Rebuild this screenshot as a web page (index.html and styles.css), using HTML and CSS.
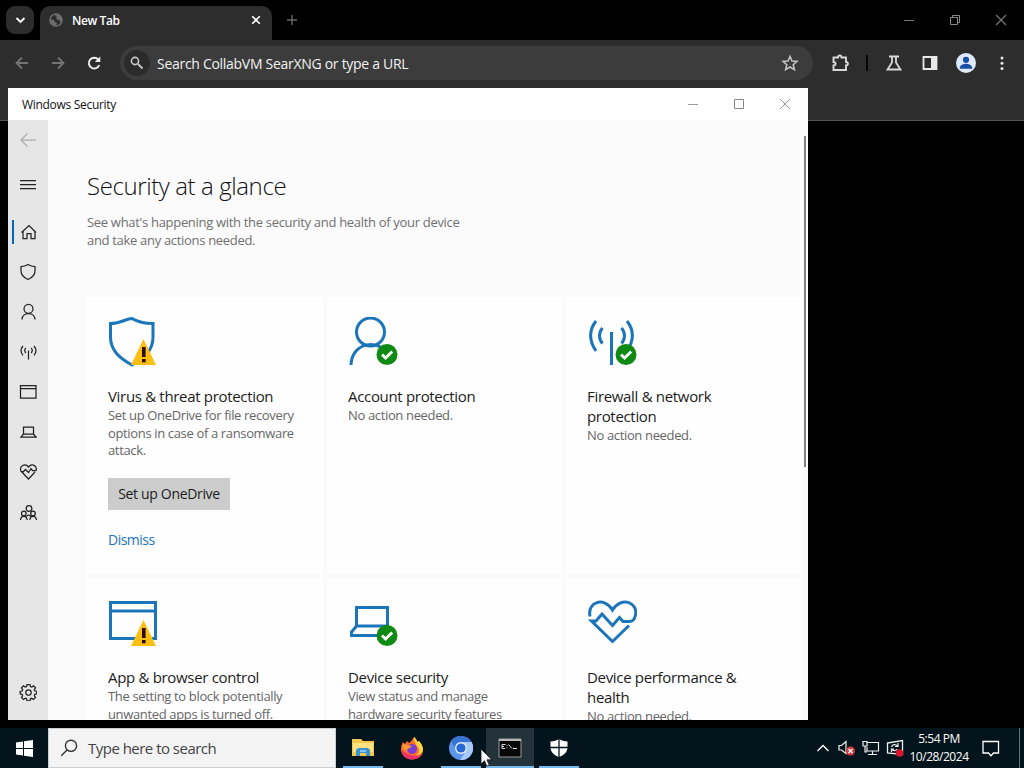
FILE: index.html
```
<!DOCTYPE html>
<html lang="en">
<head>
    <meta charset="UTF-8">
    <meta name="viewport" content="width=device-width, initial-scale=1.0">
    <title>Windows Security</title>
    <link rel="stylesheet" href="styles.css">
</head>
<body>
    <!-- Shared badges -->
    <svg class="defs" width="0" height="0">
        <defs>
            <g id="warn">
                <path d="M12.5 0L25 26H0z" fill="#fcbf12"/>
                <path d="M11 8h3.6v10H11zM11 20h3.6v3.2H11z" fill="#2a0a0a"/>
            </g>
            <g id="ok">
                <circle cx="10.5" cy="10.5" r="10.5" fill="#0f8a14"/>
                <path d="M5.5 10.5l3.6 3.6 6.6-6.6" fill="none" stroke="#fff" stroke-width="2.8"/>
            </g>
        </defs>
    </svg>

    <!-- Browser -->
    <header class="browser">
        <div class="tab-strip">
            <div class="tab-search">
                <svg width="28" height="28"><path d="M10.5 12l4 4 4-4" fill="none" stroke="#fff" stroke-width="1.8"/></svg>
            </div>
            <div class="tab">
                <svg width="14" height="14" viewBox="0 0 14 14"><circle cx="7" cy="7" r="6" fill="#2b2b2b" stroke="#6c6c6c" stroke-width="1.6"/><path d="M1 6l4 1 1 2 2 1-1 3-3-1-3-3zM7 1l-1 2 2 1-1 2 3 1 1 2 2-1V5l-3-3z" fill="#6c6c6c"/></svg>
                <span class="tab-title">New Tab</span>
                <svg width="10" height="10"><path d="M1.2 1.2l7.6 7.6M8.8 1.2L1.2 8.8" stroke="#fff" stroke-width="1.6"/></svg>
            </div>
            <svg class="new-tab" width="12" height="12"><path d="M6 1v10M1 6h10" stroke="#666" stroke-width="1.4"/></svg>
            <div class="window-buttons dark">
                <svg width="46" height="40"><path d="M18 20.500h10" stroke="#777"/></svg>
                <svg width="46" height="40" fill="none" stroke="#888"><path d="M18.500 17.500h7v7h-7zM20.500 17v-1.500h7v7H26"/></svg>
                <svg width="46" height="40"><path d="M18 15l10 10M28 15L18 25" stroke="#777" stroke-width="1.2"/></svg>
            </div>
        </div>
        <div class="toolbar">
            <svg class="nav" width="16" height="16"><path d="M14 8H3M8 2.500L2.500 8 8 13.500" stroke="#757575"/></svg>
            <svg class="nav" width="16" height="16"><path d="M2 8h11M8 2.500L13.500 8 8 13.500" stroke="#757575"/></svg>
            <svg class="nav" width="16" height="16"><path d="M13.300 10A5.400 5.400 0 1 1 12.300 4.500" stroke="#eee" stroke-width="1.900"/><path d="M14.300 1.500v5.600H8.800z" fill="#eee"/></svg>
            <div class="omnibox">
                <span class="engine"><svg width="14" height="14"><circle cx="5" cy="5" r="3.600" fill="none" stroke="#c8c8c8" stroke-width="1.600"/><path d="M8 8l4.500 4.500" stroke="#c8c8c8" stroke-width="1.800"/></svg></span>
                <span class="placeholder">Search CollabVM SearXNG or type a URL</span>
                <svg width="18" height="18" viewBox="0 0 18 18"><path d="M9 2.300l2 4.700 5 .4-3.800 3.300 1.200 5L9 13l-4.400 2.700 1.200-5L2 7.400l5-.4z" fill="none" stroke="#c4c4c4" stroke-width="1.500"/></svg>
            </div>
            <svg class="ext" width="20" height="20"><path d="M2.500 4.500h4.500C7 1.800 10.500 1.800 10.500 4.500H15v4.500c2.500 0 2.500 3.500 0 3.500v4.500H2.500v-4.500c2.700 0 2.700-3.500 0-3.500z" fill="none" stroke="#d8d8d8" stroke-width="1.900"/></svg>
            <span class="divider"></span>
            <svg class="flask" width="18" height="18"><path d="M4 2.500h10M7 3v5.500L2.500 15.500h13L11 8.500V3" fill="none" stroke="#d8d8d8" stroke-width="1.800"/></svg>
            <svg class="panel" width="16" height="16"><path d="M1.500 2h13v12h-13z" fill="none" stroke="#e8e8e8" stroke-width="1.800"/><path d="M9 1.500h6v13H9z" fill="#e8e8e8"/></svg>
            <svg class="profile" width="20" height="20"><circle cx="10" cy="10" r="10" fill="#dfe9fd"/><circle cx="10" cy="6.800" r="3.100" fill="#174ea6"/><path d="M3.800 14.500c1-5 11.400-5 12.400 0v1.200H3.800z" fill="#174ea6"/></svg>
            <svg class="more" width="6" height="18" fill="#e8e8e8"><circle cx="3" cy="4" r="1.500"/><circle cx="3" cy="9.300" r="1.500"/><circle cx="3" cy="14.600" r="1.500"/></svg>
        </div>
    </header>

    <!-- Windows Security window -->
    <main class="window">
        <div class="titlebar">
            <span>Windows Security</span>
            <div class="window-buttons">
                <svg width="46" height="32"><path d="M18 16.500h10" stroke="#999"/></svg>
                <svg width="46" height="32"><path d="M18.500 11.500h9v9h-9z" fill="none" stroke="#888"/></svg>
                <svg width="46" height="32"><path d="M18 11l10 10M28 11L18 21" stroke="#999"/></svg>
            </div>
        </div>
        <div class="window-body">
            <nav class="sidebar">
                <a class="item back"><svg width="18" height="18"><path d="M17 9H2M8.500 2.500L2 9l6.500 6.500" stroke="#aaa"/></svg></a>
                <a class="item menu"><svg width="18" height="18"><path d="M1 5.500h16M1 9.500h16M1 13.500h16"/></svg></a>
                <a class="item active"><svg width="18" height="18"><path d="M2.500 9.500L10 2.500l7 7M4 8.500v7h4v-5h4v5h4v-7"/></svg></a>
                <a class="item"><svg width="18" height="18"><path d="M9 1.500c2.400 1.500 4.500 2 7 2V8c0 4-2.500 6.500-7 8.500C4.500 14.500 2 12 2 8V3.500c2.500 0 4.600-.5 7-2z"/></svg></a>
                <a class="item"><svg width="18" height="18"><circle cx="9.500" cy="5.800" r="4.500"/><path d="M3 16.500c.3-8 12.700-8 13 0"/></svg></a>
                <a class="item"><svg width="18" height="18"><path d="M9.500 7.500v9M6.800 4.800c-1.200 1.500-1.200 3.700 0 5.200M12.200 4.800c1.200 1.500 1.200 3.700 0 5.200M4 3c-2.400 2.800-2.400 6.500 0 9.300M15 3c2.400 2.800 2.400 6.500 0 9.300"/></svg></a>
                <a class="item"><svg width="18" height="18"><path d="M1.500 2.500h15.500v12.500H1.500zM1.500 5.500H17"/></svg></a>
                <a class="item"><svg width="18" height="18"><path d="M4.500 4h10v7h-10zM4.500 11L2 14h15l-2.500-3"/></svg></a>
                <a class="item"><svg width="18" height="18"><path d="M2 8C0 3 6-.5 9.500 4 13-.5 18.500 3 17 7.500h-3.500L12 5.500 9.500 9.500 6.500 6.500 4.500 8.500H2.500l7 7.500 6.500-7"/></svg></a>
                <a class="item people"><svg width="18" height="18"><circle cx="10" cy="4.500" r="2.800"/><circle cx="4.800" cy="9.500" r="2.300"/><circle cx="14" cy="9.500" r="2.300"/><path d="M1.500 16c.3-5 6.300-5 6.600 0M10.800 16c.3-5 6.300-5 6.600 0M7.500 12.500c1-1.700 3.200-1.700 4.200 0"/></svg></a>
                <a class="item settings"><svg width="18" height="18"><path d="M8 1.500h3l.4 2 1.300.6 1.800-1.200 2 2-1.200 1.900.5 1.200 2 .4v2.500l-2 .5-.5 1.300 1.100 1.800-1.900 2-1.800-1.200-1.300.5-.4 2H8l-.4-2-1.300-.6-1.800 1.200-2-2 1.100-1.800-.5-1.200-1.900-.5V8.400l1.900-.4.600-1.200-1.200-1.900 2-2 1.800 1.200 1.300-.6z"/><circle cx="9.500" cy="9.600" r="2.700"/></svg></a>
            </nav>
            <section class="content">
                <h1>Security at a glance</h1>
                <p class="intro">See what's happening with the security and health of your device<br>and take any actions needed.</p>
                <div class="cards">
                    <article class="card">
                        <svg class="card-icon" width="50" height="50"><path d="M24 1.500c5 3 9.500 5 21 5V20c0 13-8 21-21 28C11 41 2.500 33 2.500 20V6.500C13 6.500 18 1.500 24 1.500z"/><use href="#warn" x="23" y="22"/></svg>
                        <h2>Virus &amp; threat protection</h2>
                        <p>Set up OneDrive for file recovery<br>options in case of a ransomware<br>attack.</p>
                        <button>Set up OneDrive</button>
                        <a class="dismiss" href="#">Dismiss</a>
                    </article>
                    <article class="card">
                        <svg class="card-icon" width="50" height="50"><circle cx="22.500" cy="15" r="14"/><path d="M3 48C4 24 32 22 39 37"/><use href="#ok" x="28.500" y="27"/></svg>
                        <h2>Account protection</h2>
                        <p>No action needed.</p>
                    </article>
                    <article class="card">
                        <svg class="card-icon" width="50" height="50"><path d="M24.500 15v33M15.500 11c-4 4.500-4 11 0 15.500M34.500 11c4 4.500 4 11 0 15.500M9 4c-7 9-7 19.500 0 30M40 4c7 9 7 19.500 0 30"/><use href="#ok" x="28.500" y="27"/></svg>
                        <h2>Firewall &amp; network<br>protection</h2>
                        <p>No action needed.</p>
                    </article>
                    <article class="card">
                        <svg class="card-icon" width="50" height="50"><path d="M2.500 4.500h45v36h-45zM2.500 13h45"/><use href="#warn" x="23" y="22"/></svg>
                        <h2>App &amp; browser control</h2>
                        <p>The setting to block potentially<br>unwanted apps is turned off.</p>
                    </article>
                    <article class="card">
                        <svg class="card-icon" width="50" height="50"><path d="M8.500 9.500h31V28h-31zM8.500 28l-5 6v3.500h30"/><use href="#ok" x="28.500" y="27"/></svg>
                        <h2>Device security</h2>
                        <p>View status and manage<br>hardware security features</p>
                    </article>
                    <article class="card">
                        <svg class="card-icon" width="50" height="50"><path d="M3 18.500C0 4 17-2 25.500 12 34-2 51 4 48.500 17c-1 5-3.500 6.500-6 6.500H36l-3.500-4-7 8L15 16l-6 7H4.500l21 20.500L42 27.500"/></svg>
                        <h2>Device performance &amp;<br>health</h2>
                        <p>No action needed.</p>
                    </article>
                </div>
            </section>
            <div class="scrollbar"></div>
        </div>
    </main>

    <!-- Taskbar -->
    <footer class="taskbar">
        <div class="start"><svg width="17" height="17" fill="#fff"><path d="M0 2.400L7 1.400V8H0zM8 1.200L17 0v8H8zM0 9h7v6.600l-7-1zM8 9h9v8l-9-1.200z"/></svg></div>
        <div class="search">
            <svg width="18" height="18"><circle cx="10" cy="6.800" r="5.600" fill="none" stroke="#333" stroke-width="1.400"/><path d="M6 11l-6 6" stroke="#333" stroke-width="1.400"/></svg>
            <span>Type here to search</span>
        </div>
        <div class="apps">
            <div class="app running"><svg width="24" height="24"><path d="M1 3h9l2 2h11v15H1z" fill="#f3c64c"/><path d="M2 7h20v9H2z" fill="#ffe083"/><path d="M5 20v-6l2-2h10l2 2v6h-4v-3H9v3z" fill="#3c91cf"/><path d="M9 14h6v2H9z" fill="#8bc7ee"/></svg></div>
            <div class="app"><svg width="24" height="24"><path d="M14 1c2 2 3 3 3 5l2-1c3 4 4 6 4 9 0 6-5 9.500-11 9.500S1 19 1 13c0-3 1-5 2-7l2 2 2-3 2 2c2-1 3-3 5-6z" fill="#ff6b2c"/><path d="M14 1c-1 4 2 5 2 8 4 3 4 9-1 11 5-1 7-3 8-6 0-4-2-7-4-9l-2 1c0-2-1-3-3-5z" fill="#ffd43b"/><path d="M2 14c0 5 4 9.500 10 9.500 5 0 9-3 10-6-4 4-14 3-20-3.500z" fill="#ef2f6b"/><circle cx="12" cy="13" r="5" fill="#7a3fd1"/><path d="M3 8l4 1 5 1-2 2c-2 0-3 1-3 3-4-1-5-4-4-7z" fill="#ff9a2e"/></svg></div>
            <div class="app running"><svg width="24" height="24"><circle cx="12" cy="12" r="12" fill="#5c97ee"/><path d="M12 0a12 12 0 0 1 10.500 6H12a6 6 0 0 0-6 6L2 5a12 12 0 0 1 10-5z" fill="#3673d2"/><path d="M22.500 6A12 12 0 0 1 11 24l6-9a6 6 0 0 0 0-6l-3-3z" fill="#a9caff"/><circle cx="12" cy="12" r="6" fill="#e7f1ff"/><circle cx="12" cy="12" r="4.600" fill="#2768d4"/></svg></div>
            <div class="app running current"><svg width="24" height="24"><path d="M1 3h22v18H1z" fill="#080808" stroke="#999"/><path d="M1 3h22v2H1z" fill="#b9b9b9"/><path d="M7.500 8.500H4v4h3M4 10.500h2M9 9v.8M9 11.500v.8M10.500 8.500l3.500 4M15 12.500h4" fill="none" stroke="#ddd"/></svg></div>
            <div class="app running"><svg width="18" height="18"><path d="M9 0c2.500 1.700 5 2.300 8.500 2.500V8c0 4.800-3 7.800-8.500 10C3.500 15.800.5 12.800.5 8V2.500C4 2.300 6.500 1.700 9 0z" fill="#fff"/><path d="M9 0v18M0 8.500h18" stroke="#04141c" stroke-width="1.300"/></svg></div>
        </div>
        <div class="tray">
            <svg width="24" height="20"><path d="M6.500 13l5.500-5.500 5.500 5.500" fill="none" stroke="#fff" stroke-width="1.300"/></svg>
            <svg width="24" height="20"><path d="M4 7.500h2.500L11 3.500v12L6.500 12H4z" fill="none" stroke="#eee" stroke-width="1.200"/><circle cx="15.500" cy="13" r="4.500" fill="#d13a40"/><path d="M13.500 11l4 4M17.500 11l-4 4" stroke="#fff" stroke-width="1.300"/></svg>
            <svg width="24" height="20" fill="none" stroke="#eee" stroke-width="1.200"><path d="M8 4.500h11.500v8.500H8V9M13.500 13v3.500M9 16.500h9M4 3.500h4V8H4zM6 8v6h2"/></svg>
            <svg width="24" height="20"><path d="M4.500 5L19.500 2.500v14l-15-1.500z" fill="none" stroke="#eee" stroke-width="1.300"/><path d="M8.500 9c1-3 4-3 6-1M15 5v3.500h-3M14 11c-1 2-3 2-5 .5M8.500 14v-3H11" fill="none" stroke="#eee" stroke-width="1.200"/><circle cx="16.500" cy="15" r="3.800" fill="#d9152f"/></svg>
            <div class="clock"><span>5:54 PM</span><span>10/28/2024</span></div>
            <svg class="notify" width="18" height="20"><path d="M1 3.500h15.500v11.500h-5L9 17.800 6.500 15H1z" fill="none" stroke="#fff" stroke-width="1.300"/></svg>
            <span class="show-desktop"></span>
        </div>
    </footer>

    <svg class="cursor" width="13" height="20"><path d="M1 1v15l3.500-3.200 2.300 5.400 2.500-1.100L7 11.800h4.700z" fill="#fff" stroke="#111" stroke-width=".8"/></svg>
</body>
</html>
```
FILE: styles.css
```
/* General */
* {
    margin: 0;
    padding: 0;
    box-sizing: border-box;
}

body {
    width: 1024px;
    height: 768px;
    overflow: hidden;
    background: #000;
    font-family: "Open Sans", "Noto Sans", sans-serif;
    display: flex;
    flex-direction: column;
    justify-content: space-between;
    white-space: nowrap;
}

svg {
    display: block;
    flex: none;
}

.defs {
    position: absolute;
}

/* Browser */
.browser {
    height: 121px;
    background: #2d2d2d;
    border-bottom: 1px solid #555;
}

.tab-strip {
    height: 40px;
    display: flex;
    align-items: center;
    padding-left: 6px;
    background: #000;
}

.tab-search {
    width: 28px;
    height: 28px;
    border-radius: 9px;
    background: #2d2d2d;
}

.tab {
    width: 232px;
    height: 34px;
    margin: 6px 0 0 6px;
    padding: 0 11px 6px 9px;
    display: flex;
    align-items: center;
    border-radius: 10px 10px 0 0;
    background: #2d2d2d;
}

.tab-title {
    flex: 1;
    margin-left: 9px;
    font-size: 12px;
    font-weight: 600;
    letter-spacing: -0.4px;
    color: #fff;
}

.new-tab {
    margin-left: 14px;
}

.window-buttons {
    display: flex;
    margin-left: auto;
}

.toolbar {
    height: 46px;
    display: flex;
    align-items: center;
    padding-left: 14px;
}

.nav {
    margin-right: 20px;
    fill: none;
    stroke-width: 1.8;
}

.omnibox {
    width: 693px;
    height: 34px;
    margin-left: -2px;
    padding: 0 14px 0 4px;
    display: flex;
    align-items: center;
    border-radius: 17px;
    background: #3c3c3c;
}

.engine {
    width: 26px;
    height: 26px;
    display: flex;
    align-items: center;
    justify-content: center;
    border-radius: 13px;
    background: #2b2b2b;
}

.placeholder {
    flex: 1;
    margin-left: 7px;
    font-size: 14px;
    letter-spacing: -0.29px;
    color: #f2f2f2;
}

.ext {
    margin-left: 18px;
}

.divider {
    width: 2px;
    height: 16px;
    margin: 0 17px 0 15px;
    background: #080808;
}

.panel {
    margin-left: 19px;
}

.profile {
    margin-left: 18px;
}

.more {
    margin-left: 23px;
}

/* Security window */
.window {
    position: absolute;
    left: 8px;
    top: 88px;
    width: 800px;
    height: 632px;
    background: #fbfbfb;
    overflow: hidden;
}

.titlebar {
    height: 32px;
    display: flex;
    align-items: center;
    padding-left: 14px;
    background: #fff;
    font-size: 12px;
    letter-spacing: -0.3px;
    color: #111;
}

.window-body {
    height: 600px;
    display: flex;
}

/* Sidebar */
.sidebar {
    width: 40px;
    display: flex;
    flex-direction: column;
    background: #e6e6e6;
}

.item {
    height: 40px;
    display: flex;
    align-items: center;
    justify-content: center;
}

.item svg {
    fill: none;
    stroke: #222;
    stroke-width: 1.25;
}

.item.menu {
    height: 48px;
}

.item.active {
    height: 24px;
    margin: 12px 0 8px 4px;
    padding-right: 6px;
    border-left: 2px solid #0067c0;
}

.item.people {
    margin-top: 1px;
}

.item.settings {
    margin: auto 0 8px;
}

/* Content */
.content {
    width: 754px;
    padding: 50px 0 0 39px;
}

h1 {
    font-size: 24px;
    font-weight: 300;
    line-height: 32px;
    letter-spacing: -0.4px;
    color: #111;
}

.intro {
    margin-top: 11px;
    font-size: 13px;
    line-height: 18px;
    letter-spacing: -0.31px;
    color: #707070;
}

.cards {
    margin-top: 48px;
    display: grid;
    grid-template-columns: 236px 235px 235px;
    grid-template-rows: 277px 277px;
    gap: 4px;
}

.card {
    padding: 20px 0 0 21px;
    background: #fefefe;
}

.card-icon {
    margin-bottom: 19px;
    fill: none;
    stroke: #1a75bb;
    stroke-width: 3;
}

.card-icon use {
    stroke: none;
}

.card h2 {
    font-size: 15px;
    font-weight: 400;
    line-height: 20px;
    letter-spacing: -0.32px;
    color: #1c1c1c;
}

.card p {
    margin-top: 1px;
    font-size: 13px;
    line-height: 17.5px;
    letter-spacing: -0.35px;
    color: #666;
}

.card button {
    width: 122px;
    height: 32px;
    margin-top: 18px;
    display: block;
    border: none;
    background: #ccc;
    font-family: inherit;
    font-size: 14px;
    letter-spacing: -0.33px;
    color: #1c1c1c;
}

.dismiss {
    display: block;
    margin-top: 20px;
    font-size: 14px;
    line-height: 20px;
    letter-spacing: -0.5px;
    color: #1a75bb;
    text-decoration: none;
}

.scrollbar {
    width: 2px;
    height: 331px;
    margin: 16px 0 0 2px;
    background: #808080;
}

/* Taskbar */
.taskbar {
    height: 40px;
    display: flex;
    background: #04141c;
}

.start {
    width: 48px;
    display: flex;
    align-items: center;
    justify-content: center;
}

.search {
    width: 288px;
    display: flex;
    align-items: center;
    padding-left: 12px;
    border: 1px solid #c8d0d4;
    background: #f3f3f3;
    font-size: 15px;
    letter-spacing: -0.52px;
    color: #444;
}

.search span {
    margin-left: 9px;
}

.apps {
    display: flex;
    gap: 1px;
    margin-left: 3px;
}

.app {
    position: relative;
    width: 48px;
    display: flex;
    align-items: center;
    justify-content: center;
}

.running::after {
    content: "";
    position: absolute;
    left: 4px;
    right: 4px;
    bottom: 0;
    height: 2px;
    background: #76b9ed;
}

.current {
    background: #24323a;
}

.current::after {
    left: 0;
    right: 0;
}

.tray {
    margin-left: auto;
    display: flex;
    align-items: center;
    color: #fff;
}

.clock {
    width: 64px;
    display: flex;
    flex-direction: column;
    align-items: center;
    font-size: 12px;
    line-height: 18px;
    letter-spacing: -0.45px;
}

.notify {
    margin: 0 19px 0 11px;
}

.show-desktop {
    width: 5px;
    height: 40px;
    border-left: 1px solid #66747a;
}

.cursor {
    position: absolute;
    left: 480px;
    top: 748px;
}
```
